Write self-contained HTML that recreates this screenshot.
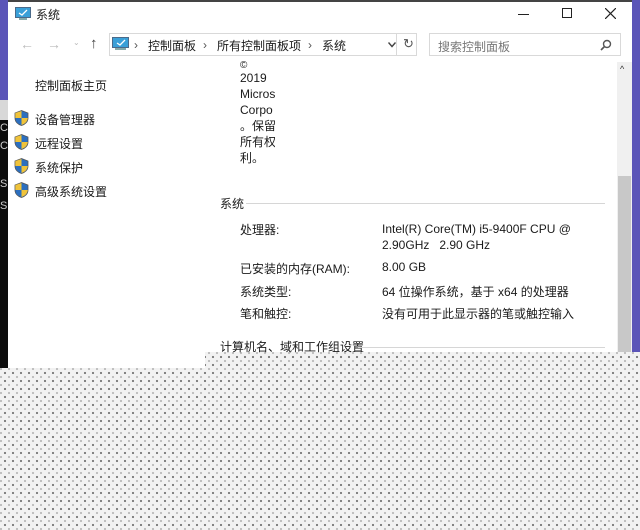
<!DOCTYPE html>
<html><head><meta charset="utf-8"><style>
*{margin:0;padding:0;box-sizing:border-box}
body{width:640px;height:530px;overflow:hidden;position:relative;background:#fff;font-family:"Liberation Sans","Noto Sans CJK SC",sans-serif;font-size:12px;color:#1a1a1a}
.dots{position:absolute;left:0;top:0;width:640px;height:530px;background-color:#f2f2f2;background-image:radial-gradient(circle,#777 0.9px,transparent 1.3px),radial-gradient(circle,#bbb 0.9px,transparent 1.3px);background-size:8px 8px,8px 8px;background-position:1px 1px,5px 5px}
.a{position:absolute}
.t{position:absolute;white-space:nowrap}
.sh{position:absolute;width:15px;height:16px}
</style></head><body>
<div class="dots"></div>
<div class="a" style="left:0;top:0;width:8px;height:100px;background:#5b55b8"></div>
<div class="a" style="left:0;top:100px;width:8px;height:20px;background:#d8d8d8"></div>
<div class="a" style="left:0;top:120px;width:8px;height:248px;background:#0c0c0c"></div>
<div class="t" style="left:0;top:122px;color:#ccc;font-size:11px">C</div>
<div class="t" style="left:0;top:140px;color:#ccc;font-size:11px">C</div>
<div class="t" style="left:0;top:178px;color:#ccc;font-size:11px">S</div>
<div class="t" style="left:0;top:200px;color:#ccc;font-size:11px">S</div>
<div class="a" style="left:632px;top:0;width:8px;height:352px;background:#5b55b8"></div>
<div class="a" style="left:8px;top:0;width:624px;height:368px;background:#fff"></div>
<div class="dots" style="left:205px;top:352px;width:427px;height:16px;background-position:-204px -351px,-200px -347px"></div>
<div class="a" style="left:8px;top:0;width:624px;height:2px;background:#444"></div>
<svg class="a" style="left:15px;top:7px" width="16" height="14"><rect x="0.5" y="0.5" width="15" height="10" fill="#3aa0d8" stroke="#4a6a8a"/><path d="M4 6l3 2 5-5" stroke="#fff" fill="none" stroke-width="1.3"/><rect x="4" y="11" width="8" height="2" fill="#8aa"/></svg>
<div class="t" style="left:36px;top:6px;font-size:12px">系统</div>
<div class="a" style="left:518px;top:14px;width:11px;height:1px;background:#222"></div>
<div class="a" style="left:562px;top:8px;width:10px;height:10px;border:1px solid #222"></div>
<svg class="a" style="left:605px;top:8px" width="11" height="11"><path d="M0 0L11 11M11 0L0 11" stroke="#222" stroke-width="1.2"/></svg>
<div class="t" style="left:20px;top:36px;color:#bbb;font-size:14px">←</div>
<div class="t" style="left:47px;top:36px;color:#bbb;font-size:14px">→</div>
<div class="t" style="left:73px;top:38px;color:#bbb;font-size:8px">⌄</div>
<div class="t" style="left:90px;top:35px;color:#444;font-size:15px">↑</div>
<div class="a" style="left:109px;top:33px;width:288px;height:23px;border:1px solid #d9d9d9"></div>
<div class="a" style="left:397px;top:33px;width:20px;height:23px;border:1px solid #d9d9d9;border-left:none"></div>
<svg class="a" style="left:112px;top:37px" width="17" height="15"><rect x="0.5" y="0.5" width="16" height="10" fill="#3aa0d8" stroke="#4a6a8a"/><path d="M5 6l3 2 5-5" stroke="#fff" fill="none" stroke-width="1.3"/><rect x="3" y="11" width="11" height="2" fill="#8aa"/></svg>
<div class="t" style="left:134px;top:38px;color:#555">›</div>
<div class="t" style="left:148px;top:37px">控制面板</div>
<div class="t" style="left:203px;top:38px;color:#555">›</div>
<div class="t" style="left:217px;top:37px">所有控制面板项</div>
<div class="t" style="left:308px;top:38px;color:#555">›</div>
<div class="t" style="left:322px;top:37px">系统</div>
<svg class="a" style="left:388px;top:42px" width="8" height="6"><path d="M0.5 0.5L4 4.5 7.5 0.5" stroke="#444" fill="none" stroke-width="1.4"/></svg>
<div class="t" style="left:403px;top:36px;color:#555;font-size:13px">↻</div>
<div class="a" style="left:429px;top:33px;width:192px;height:23px;border:1px solid #d9d9d9"></div>
<div class="t" style="left:438px;top:38px;color:#777">搜索控制面板</div>
<svg class="a" style="left:600px;top:39px" width="12" height="12"><circle cx="7" cy="5" r="3.5" stroke="#555" fill="none" stroke-width="1.4"/><path d="M4.5 7.5L1 11" stroke="#555" stroke-width="1.6"/></svg>
<div class="a" style="left:617px;top:62px;width:15px;height:290px;background:#f0f0f0"></div>
<div class="a" style="left:618px;top:176px;width:13px;height:176px;background:#c8c8c8"></div>
<div class="t" style="left:620px;top:64px;font-size:9px;color:#333">^</div>
<div class="t" style="left:35px;top:77px">控制面板主页</div>
<svg width="0" height="0" style="position:absolute"><defs><g id="s"><path d="M7.5 0.5L14 3v5c0 4-3 6.5-6.5 7.5C4 14.5 1 12 1 8V3z" fill="#2c6fbf" stroke="#555" stroke-width=".8"/><path d="M7.5 1L7.5 8H1.3V3z" fill="#f0c33a"/><path d="M7.5 8H13.8c-.3 3.5-3 6-6.3 7z" fill="#f0c33a"/></g></defs></svg>
<svg class="sh" style="left:14px;top:110px"><use href="#s"/></svg>
<svg class="sh" style="left:14px;top:134px"><use href="#s"/></svg>
<svg class="sh" style="left:14px;top:158px"><use href="#s"/></svg>
<svg class="sh" style="left:14px;top:182px"><use href="#s"/></svg>
<div class="t" style="left:35px;top:111px">设备管理器</div>
<div class="t" style="left:35px;top:135px">远程设置</div>
<div class="t" style="left:35px;top:159px">系统保护</div>
<div class="t" style="left:35px;top:183px">高级系统设置</div>
<div class="t" style="left:240px;top:60px;font-size:10px">©</div>
<div class="t" style="left:240px;top:70px;line-height:16px;font-size:12px">2019<br>Micros<br>Corpo<br>。保留<br>所有权<br>利。</div>
<div class="a" style="left:275px;top:70px;width:30px;height:100px;background:#fff"></div>
<div class="t" style="left:220px;top:195px">系统</div>
<div class="a" style="left:246px;top:203px;width:359px;height:1px;background:#d6d6d6"></div>
<div class="t" style="left:240px;top:221px">处理器:</div>
<div class="t" style="left:382px;top:221px;line-height:16px">Intel(R) Core(TM) i5-9400F CPU @<br>2.90GHz &nbsp; 2.90 GHz</div>
<div class="t" style="left:240px;top:260px">已安装的内存(RAM):</div>
<div class="t" style="left:382px;top:260px">8.00 GB</div>
<div class="t" style="left:240px;top:283px">系统类型:</div>
<div class="t" style="left:382px;top:283px">64 位操作系统，基于 x64 的处理器</div>
<div class="t" style="left:240px;top:305px">笔和触控:</div>
<div class="t" style="left:382px;top:305px">没有可用于此显示器的笔或触控输入</div>
<div class="t" style="left:220px;top:338px">计算机名、域和工作组设置</div>
<div class="a" style="left:358px;top:347px;width:247px;height:1px;background:#d6d6d6"></div>
</body></html>
